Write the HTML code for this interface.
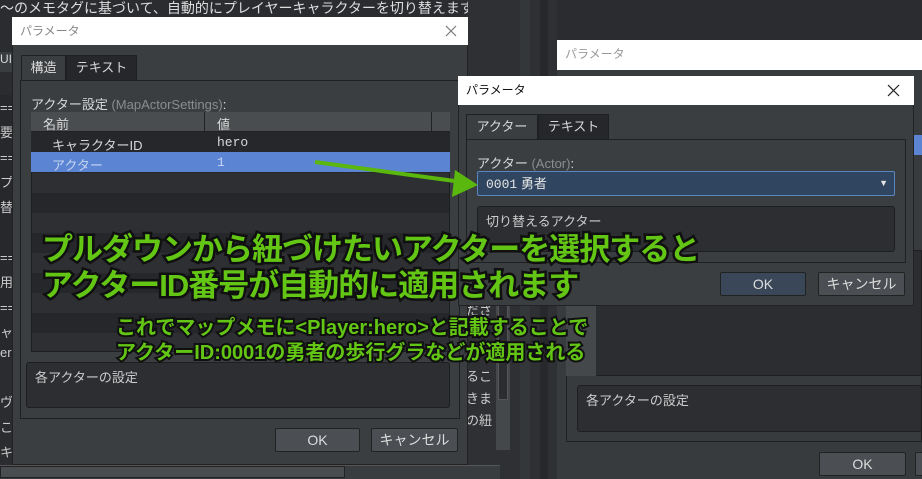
<!DOCTYPE html>
<html><head><meta charset="utf-8"><style>
*{margin:0;padding:0;box-sizing:border-box}
body{width:922px;height:479px;overflow:hidden;background:#2a2c2f;font-family:"Liberation Sans","Noto Sans CJK JP",sans-serif;color:#d8d8d8;font-size:13px;position:relative}
.a{position:absolute}
.title{background:#fff;color:#333;font-size:12px;padding-left:8px;line-height:28px}
.body{background:#3b3e41}
.tab{border:1px solid #1e2022;border-bottom:none;font-size:13px;text-align:center;line-height:24px}
.panel{border:1px solid #1e2022}
.box{background:#2c2e31;border:1px solid #1c1e20;border-radius:3px;font-size:13px;padding:4px 8px;color:#ccc}
.btn{background:#4b4e52;border:1px solid #222;border-radius:2px;text-align:center;line-height:22px;font-size:14px;color:#ddd}
.g{font-weight:bold;color:#63c514;-webkit-text-stroke:5px #101010;paint-order:stroke fill;white-space:nowrap}
</style></head><body>
<div class="a" style="left:0;top:0;font-size:14px;line-height:16px;color:#ddd">〜のメモタグに基づいて、自動的にプレイヤーキャラクターを切り替えます。</div>
<div class="a" style="left:0;top:52px;width:12px;height:20px;background:#3a3d40;font-size:12px">UI</div>
<div class="a" style="left:0;top:95px;width:12px;height:260px;background:#26282b;font-size:13px;line-height:25px;color:#ccc;overflow:hidden">==<br>要<br>==<br>プ<br>替<br><br>==<br>用<br>==<br>ャ</div>
<div class="a" style="left:0;top:340px;width:12px;height:120px;font-size:13px;line-height:25px;color:#ccc;overflow:hidden">er<br><br>ヴ<br>こ<br>キ</div>
<div class="a" style="left:468px;top:0;width:89px;height:479px;background:#2e3033"></div>
<div class="a" style="left:520px;top:0;width:10px;height:479px;background:#34373a"></div>
<div class="a" style="left:540px;top:0;width:8px;height:479px;background:#26282b"></div>
<div class="a" style="left:466px;top:300px;width:30px;height:150px;font-size:13px;line-height:22px;color:#ccc">ださ<br><br><br>るこ<br>きま<br>の紐</div>
<div class="a" style="left:496px;top:300px;width:14px;height:150px;background:#45484b"></div>
<div class="a" style="left:498px;top:305px;width:10px;height:95px;background:#2b2d30;border:1px solid #555"></div>
<div class="a" style="left:0;top:465px;width:500px;height:14px;background:#3a3d40;border-top:1px solid #555"></div>
<div class="a" style="left:0;top:466px;width:345px;height:12px;background:#4a4d50;border:1px solid #222"></div>
<div class="a body" style="left:557px;top:40px;width:365px;height:439px;background:#383b3e"></div>
<div class="a title" style="left:557px;top:40px;width:365px;height:30px;color:#999">パラメータ</div>
<div class="a" style="left:914px;top:135px;width:8px;height:20px;background:#5b84d3"></div>
<div class="a" style="left:566px;top:250px;width:356px;height:126px;border:1px solid #1e2022;background:#2b2d30"></div>
<div class="a" style="left:566px;top:250px;width:30px;height:126px;background:#45484b"></div>
<div class="a box" style="left:577px;top:385px;width:345px;height:47px">各アクターの設定</div>
<div class="a" style="left:566px;top:376px;width:356px;height:66px;border:1px solid #1e2022;border-top:none"></div>
<div class="a btn" style="left:819px;top:452px;width:87px;height:24px">OK</div>
<div class="a btn" style="left:915px;top:452px;width:10px;height:24px"></div>
<div class="a body" style="left:12px;top:17px;width:456px;height:448px;border:1px solid #222"></div>
<div class="a title" style="left:12px;top:17px;width:456px;height:28px;color:#888">パラメータ<svg style="position:absolute;right:11px;top:8px" width="12" height="12"><path d="M1 1L11 11M11 1L1 11" stroke="#777" stroke-width="1.2"/></svg></div>
<div class="a tab" style="left:21px;top:55px;width:45px;height:26px;background:#3b3e41">構造</div>
<div class="a tab" style="left:66px;top:55px;width:71px;height:25px;background:#25272a">テキスト</div>
<div class="a panel" style="left:20px;top:80px;width:440px;height:339px"></div>
<div class="a" style="left:31px;top:94px;font-size:13px">アクター設定 <span style="color:#8a8d90">(MapActorSettings)</span>:</div>
<div class="a" style="left:31px;top:112px;width:419px;height:240px;background:repeating-linear-gradient(#25272a 0 20px,#2d2f32 20px 40px);border:1px solid #1c1e20"></div>
<div class="a" style="left:31px;top:112px;width:419px;height:20px;background:#4a4d50;border-bottom:1px solid #222"></div>
<div class="a" style="left:204px;top:112px;width:1px;height:20px;background:#222"></div>
<div class="a" style="left:431px;top:112px;width:1px;height:20px;background:#222"></div>
<div class="a" style="left:43px;top:114px">名前</div>
<div class="a" style="left:217px;top:114px">値</div>
<div class="a" style="left:31px;top:132px;width:419px;height:20px;background:#25272a"></div>
<div class="a" style="left:52px;top:135px">キャラクターID</div>
<div class="a" style="left:217px;top:135px;font-family:'Liberation Mono',monospace">hero</div>
<div class="a" style="left:31px;top:152px;width:419px;height:20px;background:#5b84d3"></div>
<div class="a" style="left:52px;top:155px;color:#c6d4f0">アクター</div>
<div class="a" style="left:217px;top:155px;color:#c6d4f0;font-family:'Liberation Mono',monospace">1</div>
<div class="a box" style="left:26px;top:362px;width:424px;height:46px">各アクターの設定</div>
<div class="a btn" style="left:275px;top:428px;width:85px;height:24px">OK</div>
<div class="a btn" style="left:371px;top:428px;width:87px;height:24px">キャンセル</div>
<div class="a body" style="left:458px;top:76px;width:456px;height:230px;border:1px solid #222"></div>
<div class="a title" style="left:458px;top:76px;width:456px;height:29px;color:#111;line-height:29px">パラメータ<svg style="position:absolute;right:14px;top:8px" width="13" height="13"><path d="M1 1L12 12M12 1L1 12" stroke="#222" stroke-width="1.2"/></svg></div>
<div class="a tab" style="left:466px;top:114px;width:72px;height:26px;background:#3b3e41">アクター</div>
<div class="a tab" style="left:538px;top:114px;width:71px;height:25px;background:#25272a">テキスト</div>
<div class="a panel" style="left:466px;top:139px;width:440px;height:124px"></div>
<div class="a" style="left:477px;top:153px">アクター <span style="color:#8a8d90">(Actor)</span>:</div>
<div class="a" style="left:477px;top:171px;width:418px;height:25px;background:#2f4560;border:1px solid #5a86c0;border-radius:2px;padding-left:8px;line-height:23px;color:#e4e4e4"><span style="font-family:'Liberation Mono',monospace">0001</span> 勇者<span style="position:absolute;right:6px;top:0;font-size:9px">▼</span></div>
<div class="a box" style="left:477px;top:206px;width:418px;height:46px">切り替えるアクター</div>
<div class="a btn" style="left:720px;top:272px;width:86px;height:24px;background:#3a4759">OK</div>
<div class="a btn" style="left:818px;top:272px;width:87px;height:24px">キャンセル</div>
<svg class="a" style="left:0;top:0" width="922" height="479"><line x1="315" y1="162" x2="462" y2="182" stroke="#5ab70e" stroke-width="4"/><polygon points="478,185 455,170 452,197" fill="#5ab70e"/></svg>
<div class="a g" style="left:42px;top:232px;font-size:31px;line-height:36px;letter-spacing:-1px">プルダウンから紐づけたいアクターを選択すると<br>アクターID番号が自動的に適用されます</div>
<div class="a g" style="left:116px;top:316px;font-size:20px;line-height:25px;-webkit-text-stroke:4px #101010">これでマップメモに&lt;Player:hero&gt;と記載することで<br>アクターID:0001の勇者の歩行グラなどが適用される</div>
</body></html>
